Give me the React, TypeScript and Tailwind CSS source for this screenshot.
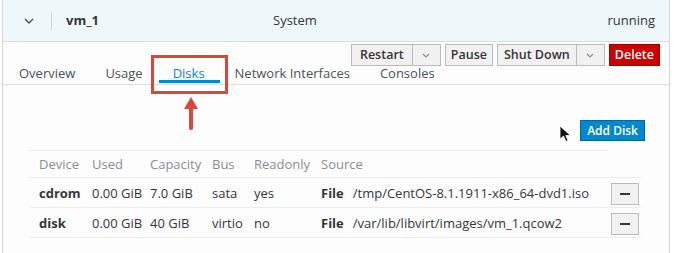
import React from 'react';

const TABS = ['Overview', 'Usage', 'Disks', 'Network Interfaces', 'Consoles'];

const DISKS = [
  { device: 'cdrom', used: '0.00 GiB', capacity: '7.0 GiB', bus: 'sata', readonly: 'yes', path: '/tmp/CentOS-8.1.1911-x86_64-dvd1.iso' },
  { device: 'disk', used: '0.00 GiB', capacity: '40 GiB', bus: 'virtio', readonly: 'no', path: '/var/lib/libvirt/images/vm_1.qcow2' },
];

const Caret: React.FC = () => (
  <svg width="8" height="5" viewBox="0 0 8 5" className="text-[#8b8d8f]">
    <path d="M1 1 L4 4 L7 1" fill="none" stroke="currentColor" strokeWidth="1.2" />
  </svg>
);

const App: React.FC = () => {
  return (
    <div className="relative w-[674px] h-[253px] overflow-hidden bg-white text-[13px] text-[#363636] whitespace-nowrap" style={{ fontFamily: '"Open Sans", "Liberation Sans", sans-serif' }}>
      <div className="ml-[2px] w-[668px] h-[260px] border-x border-[#d7d7d7] bg-[#fdfdfe]">
        {/* header row */}
        <div className="flex items-center h-[42px] pt-[1px] bg-[#eef8fb] border-b border-[#dcdcdc]">
          <div className="w-[48px] flex justify-center pl-[4px]">
            <svg width="10" height="6" viewBox="0 0 10 6" className="text-[#4d5258]">
              <path d="M1 1 L5 5 L9 1" fill="none" stroke="currentColor" strokeWidth="1.4" />
            </svg>
          </div>
          <div className="w-px h-[17px] bg-[#d1d1d1]" />
          <div className="w-[221px] pl-[14px] font-bold">vm_1</div>
          <div className="flex-1">System</div>
          <div className="pr-[14px]">running</div>
        </div>

        {/* actions */}
        <div className="flex justify-end pr-[9px] mt-[2px] h-[22px] gap-[4px] text-[12.5px]">
          <div className="flex">
            <button className="h-[22px] px-[8px] border border-[#bbbbbb] bg-[#f1f1f1] font-semibold leading-none">Restart</button>
            <button className="h-[22px] w-[29px] -ml-px border border-[#bbbbbb] bg-[#f1f1f1] flex items-center justify-center"><Caret /></button>
          </div>
          <button className="h-[22px] px-[5px] border border-[#bbbbbb] bg-[#f1f1f1] font-semibold leading-none">Pause</button>
          <div className="flex">
            <button className="h-[22px] px-[6px] border border-[#bbbbbb] bg-[#f1f1f1] font-semibold leading-none">Shut Down</button>
            <button className="h-[22px] w-[29px] -ml-px border border-[#bbbbbb] bg-[#f1f1f1] flex items-center justify-center"><Caret /></button>
          </div>
          <button className="h-[22px] px-[5px] border border-[#a30000] bg-[#cc0000] text-white font-semibold leading-none">Delete</button>
        </div>

        {/* tabs */}
        <div className="flex h-[22px] -mt-[3px] border-b border-[#dcdcdc]">
          {TABS.map((t) => (
            <div key={t} className={`relative px-[15px] first:pl-[16px] h-full flex items-start pt-[1px] ${t === 'Disks' ? 'text-[#0088ce]' : 'text-[#4d5258]'}`}>
              {t}
              {t === 'Disks' && <div className="absolute left-[1px] right-0 bottom-[1px] h-[3px] bg-[#0088ce]" />}
            </div>
          ))}
        </div>

        {/* toolbar */}
        <div className="flex justify-end pr-[24px] pt-[35px] h-[63px]">
          <button className="h-[21px] px-[6px] bg-[#0088ce] border border-[#00659c] text-white text-[12px] font-semibold leading-none">Add Disk</button>
        </div>

        {/* table */}
        <div className="ml-[26px] mt-[2px] w-[612px]">
          <div className="w-[579px] h-px bg-[#ececec]" />
          <div className="flex h-[27px] pt-[2px] items-center text-[#8b8d8f] border-b border-[#ececec]">
            <div className="w-[53px] pl-[10px]">Device</div>
            <div className="w-[58px] pl-[10px]">Used</div>
            <div className="w-[62px] pl-[10px]">Capacity</div>
            <div className="w-[42px] pl-[10px]">Bus</div>
            <div className="w-[67px] pl-[10px]">Readonly</div>
            <div className="flex-1 pl-[10px]">Source</div>
          </div>
          {DISKS.map((d) => (
            <div key={d.device} className="flex h-[30px] pt-[2px] items-center border-b border-[#ececec]">
              <div className="w-[53px] pl-[10px] font-bold">{d.device}</div>
              <div className="w-[58px] pl-[10px]">{d.used}</div>
              <div className="w-[62px] pl-[10px]">{d.capacity}</div>
              <div className="w-[42px] pl-[10px]">{d.bus}</div>
              <div className="w-[67px] pl-[10px]">{d.readonly}</div>
              <div className="flex-1 pl-[10px] flex gap-[9px]">
                <span className="font-bold">File</span>
                <span>{d.path}</span>
              </div>
              <button className="mr-[2px] w-[28px] h-[22px] border border-[#bbbbbb] bg-[#f1f1f1] flex items-center justify-center">
                <span className="block w-[10px] h-[2px] bg-[#363636]" />
              </button>
            </div>
          ))}
        </div>
      </div>

      {/* annotation box */}
      <div className="absolute left-[151px] top-[55px] w-[77px] h-[39px] border-[3px] border-[#d8473e]" />
      {/* annotation arrow */}
      <svg className="absolute left-[182px] top-[96px]" width="18" height="36" viewBox="0 0 18 36">
        <path d="M9 1 L16 13 L11 13 L11 33 Q9 35 7 33 L7 13 L2 13 Z" fill="#d8473e" />
      </svg>
      {/* mouse cursor */}
      <svg className="absolute left-[559px] top-[125px]" width="14" height="18" viewBox="0 0 14 18">
        <path d="M1 1 L1 14 L4.5 11 L7 16.5 L9 15.5 L6.8 10.5 L11.5 10.5 Z" fill="#111" stroke="#fff" strokeWidth="0.8" />
      </svg>
    </div>
  );
};

export default App;
